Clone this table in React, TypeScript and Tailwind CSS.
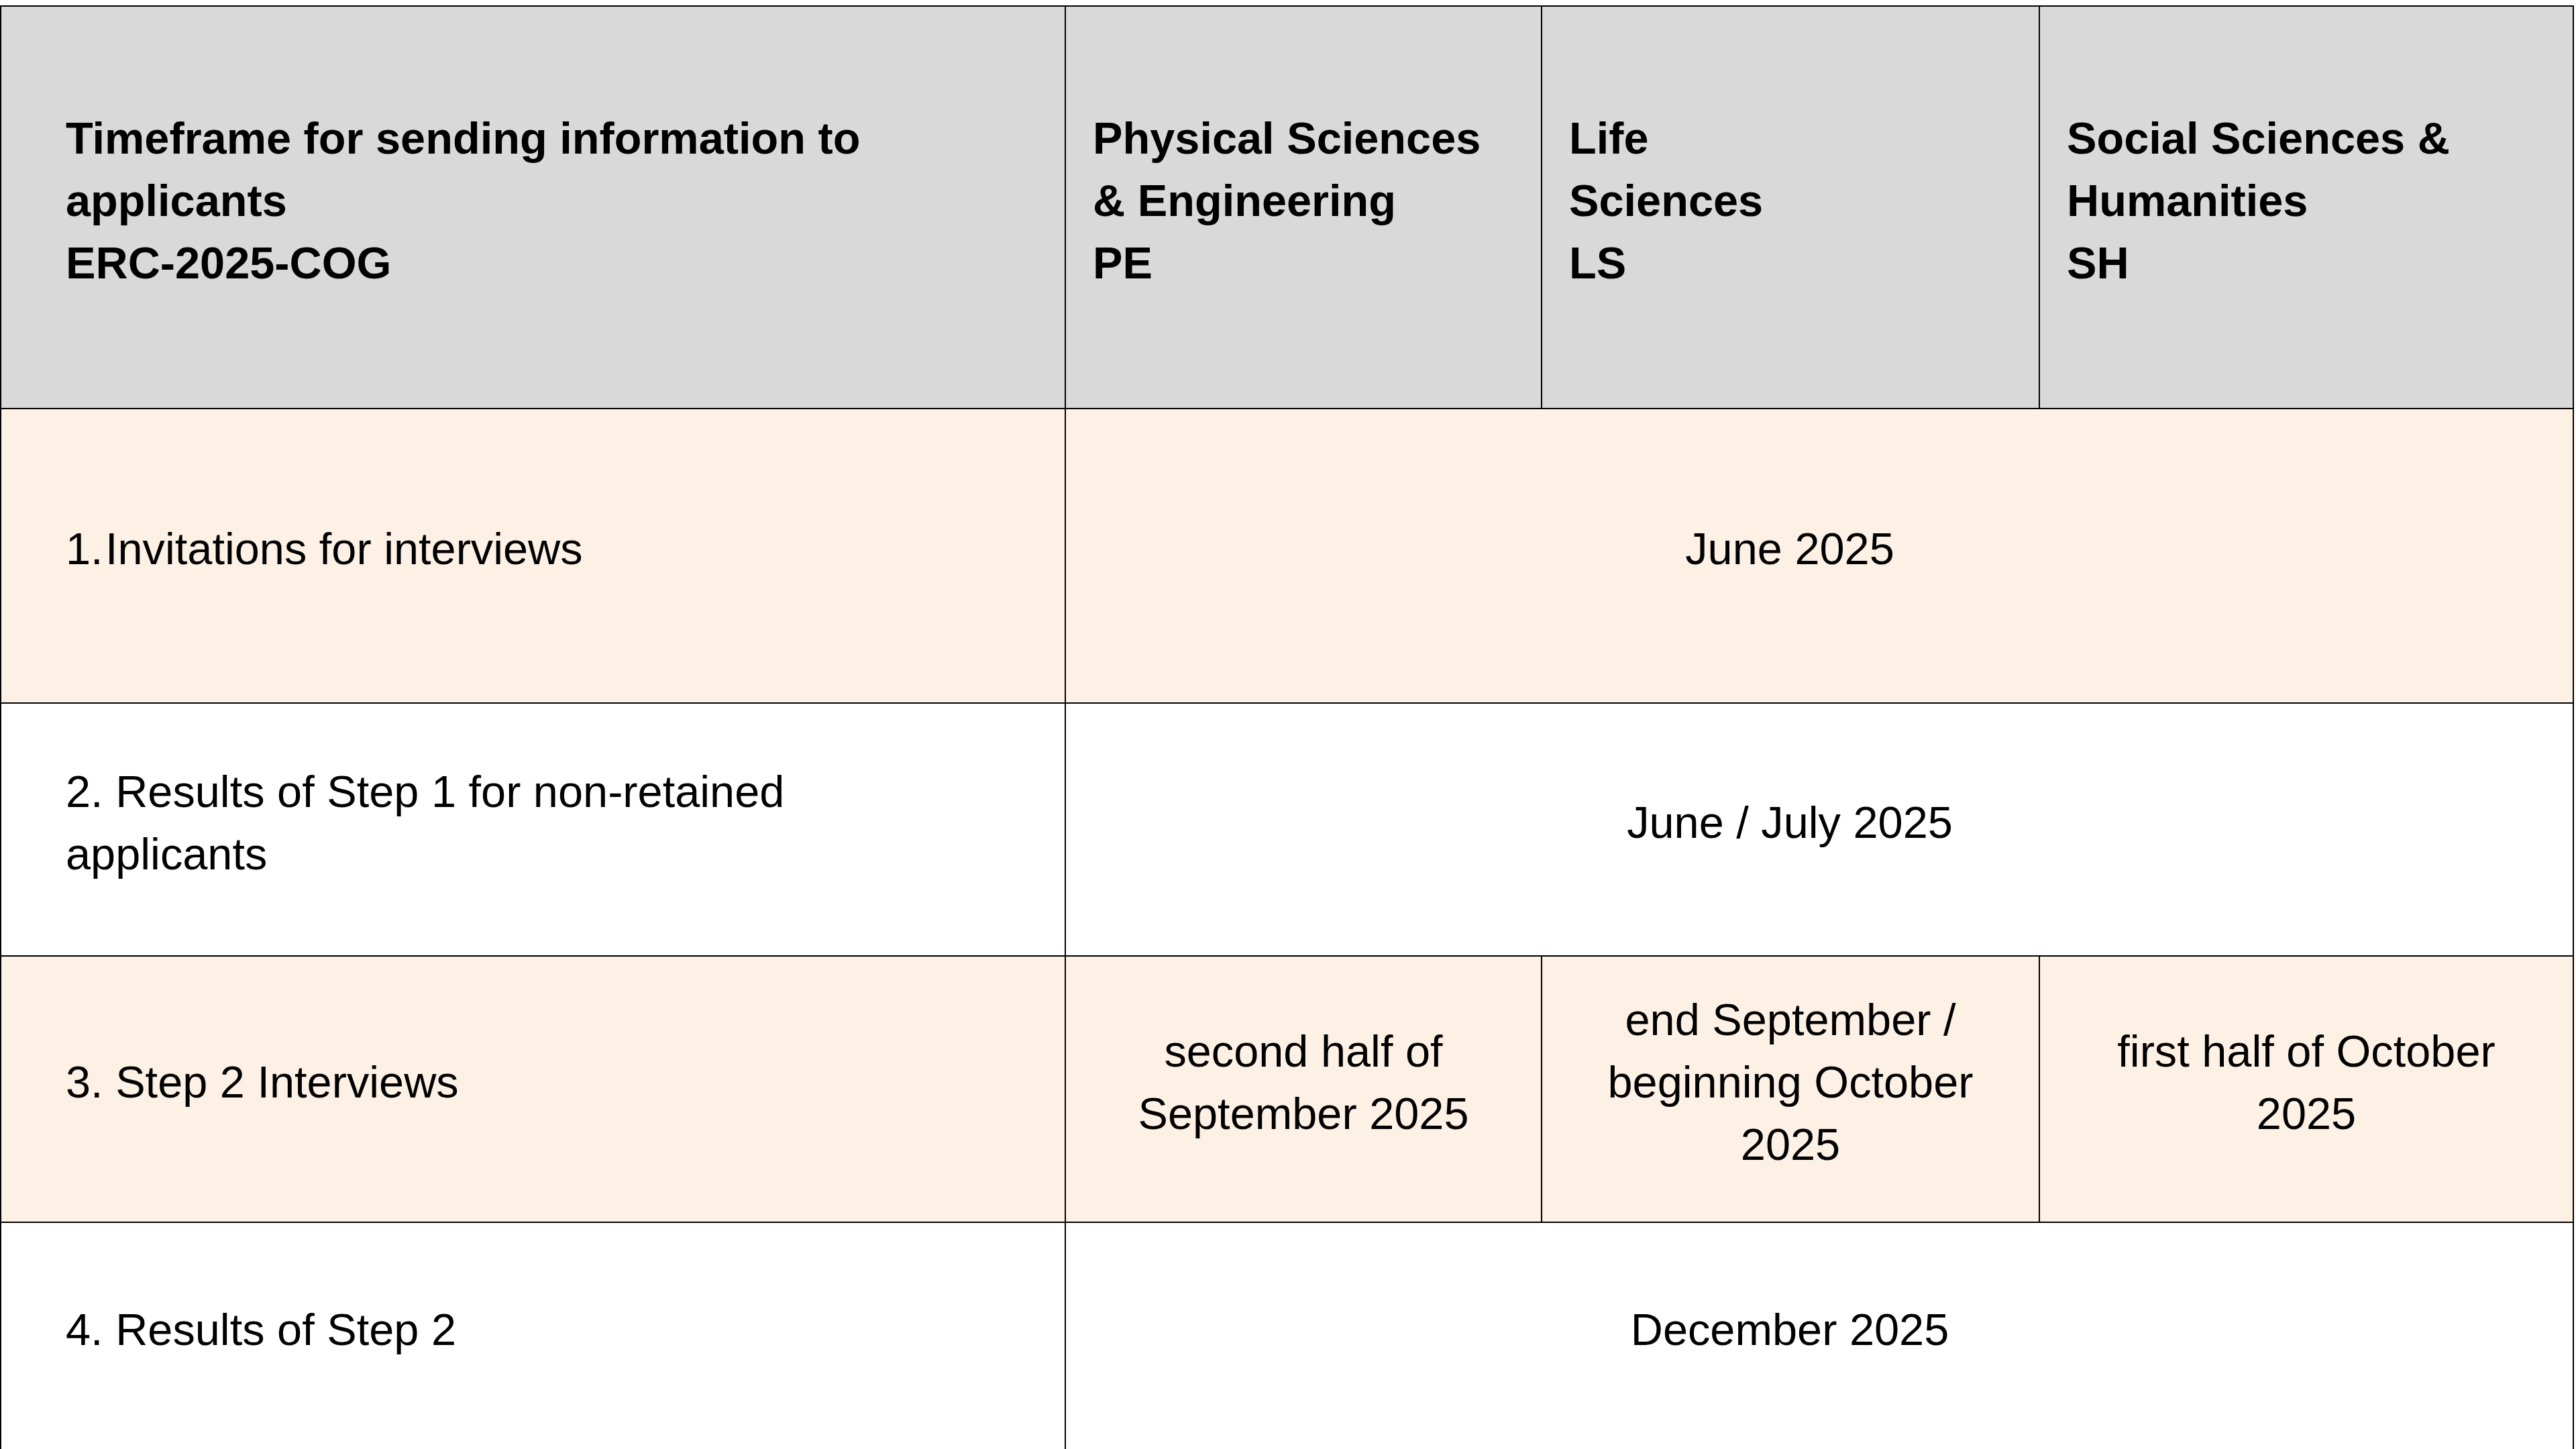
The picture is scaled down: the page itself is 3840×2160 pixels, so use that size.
export default function App() {
  const font = { fontFamily: '"Liberation Sans", Arial, sans-serif' };
  const cell = "border-2 border-black align-middle pb-[20px] pt-0";

  return (
    <div className="w-[3840px] h-[2160px] overflow-hidden bg-white pt-[8px]" style={font}>
      <table className="w-[3835px] table-fixed border-collapse text-[66.7px] leading-[93px] text-black">
        <colgroup>
          <col className="w-[1587px]" />
          <col className="w-[710px]" />
          <col className="w-[742px]" />
          <col className="w-[796px]" />
        </colgroup>
        <tbody>
          {/* header */}
          <tr className="h-[600px] bg-[#d9d9d9] font-bold">
            <td className={`${cell} pl-[96px] pr-[130px]`}>
              Timeframe for sending information to applicants
              <br />
              ERC-2025-COG
            </td>
            <td className={`${cell} pl-[40px] pr-[10px]`}>
              Physical Sciences
              <br />& Engineering
              <br />
              PE
            </td>
            <td className={`${cell} pl-[40px] pr-[10px]`}>
              Life
              <br />
              Sciences
              <br />
              LS
            </td>
            <td className={`${cell} pl-[40px] pr-[10px]`}>
              Social Sciences &
              <br />
              Humanities
              <br />
              SH
            </td>
          </tr>

          <tr className="h-[439px] bg-[#fdf0e4]">
            <td className={`${cell} pl-[96px] pr-[130px]`}>
              <div className="flex">
                <span className="w-[59px] shrink-0">1.</span>
                <span>Invitations for interviews</span>
              </div>
            </td>
            <td colSpan={3} className={`${cell} pl-[42px] pr-[130px] text-center`}>
              June 2025
            </td>
          </tr>

          <tr className="h-[377px] bg-white">
            <td className={`${cell} pl-[96px] pr-[130px]`}>
              2. Results of Step 1 for non-retained applicants
            </td>
            <td colSpan={3} className={`${cell} pl-[42px] pr-[130px] text-center`}>
              June / July 2025
            </td>
          </tr>

          <tr className="h-[397px] bg-[#fdf0e4]">
            <td className={`${cell} pl-[96px] pr-[130px]`}>3. Step 2 Interviews</td>
            <td className={`${cell} px-[20px] text-center`}>
              second half of
              <br />
              September 2025
            </td>
            <td className={`${cell} px-[20px] text-center`}>
              end September /
              <br />
              beginning October
              <br />
              2025
            </td>
            <td className={`${cell} px-[20px] text-center`}>
              first half of October
              <br />
              2025
            </td>
          </tr>

          <tr className="h-[340px] bg-white">
            <td className={`${cell} pl-[96px] pr-[130px]`}>4. Results of Step 2</td>
            <td colSpan={3} className={`${cell} pl-[42px] pr-[130px] text-center`}>
              December 2025
            </td>
          </tr>
        </tbody>
      </table>
    </div>
  );
}
